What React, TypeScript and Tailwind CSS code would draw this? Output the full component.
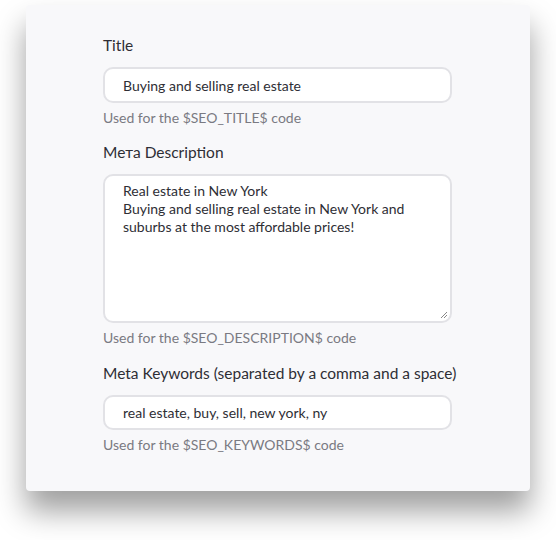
const font = { fontFamily: 'Lato, "Noto Sans", sans-serif' };

function Help({ code }: { code: string }) {
  return (
    <p className="mt-[6px] text-[14px] leading-[18px] text-[#7a7a82]">
      Used for the {code} code
    </p>
  );
}

export default function App() {
  return (
    <div className="min-h-[540px] w-[556px] bg-white pl-[26px] pt-[5px]" style={font}>
      <div className="w-[504px] h-[486px] rounded-[4px] bg-[#f8f8fa] shadow-[0_20px_30px_rgba(0,0,0,0.38)] pl-[77px] pr-[78px] pt-[30px]">
        <label className="block text-[15.5px] leading-[20px] text-[#2e2e35]">Title</label>
        <div className="mt-[12px] h-[36px] rounded-[10px] border-2 border-[#e2e2e6] bg-white pl-[18px] flex items-center text-[14px] text-[#2e2e35]">
          Buying and selling real estate
        </div>
        <Help code="$SEO_TITLE$" />

        <label className="mt-[15px] block text-[15.5px] leading-[20px] text-[#2e2e35]">Мета Description</label>
        <div className="relative mt-[12px] h-[149px] rounded-[10px] border-2 border-[#e2e2e6] bg-white pl-[18px] pt-[6px] text-[14px] leading-[18px] text-[#2e2e35]">
          Real estate in New York
          <br />
          Buying and selling real estate in New York and
          <br />
          suburbs at the most affordable prices!
          <svg className="absolute right-[2px] bottom-[2px]" width="8" height="8" viewBox="0 0 8 8">
            <path d="M7 1L1 7M7 4L4 7" stroke="#888" strokeWidth="1" />
          </svg>
        </div>
        <Help code="$SEO_DESCRIPTION$" />

        <label className="mt-[16px] block whitespace-nowrap text-[15.5px] leading-[20px] text-[#2e2e35]">
          Meta Keywords (separated by a comma and a space)
        </label>
        <div className="mt-[12px] h-[35px] rounded-[10px] border-2 border-[#e2e2e6] bg-white pl-[18px] flex items-center text-[14px] text-[#2e2e35]">
          real estate, buy, sell, new york, ny
        </div>
        <Help code="$SEO_KEYWORDS$" />
      </div>
    </div>
  );
}
